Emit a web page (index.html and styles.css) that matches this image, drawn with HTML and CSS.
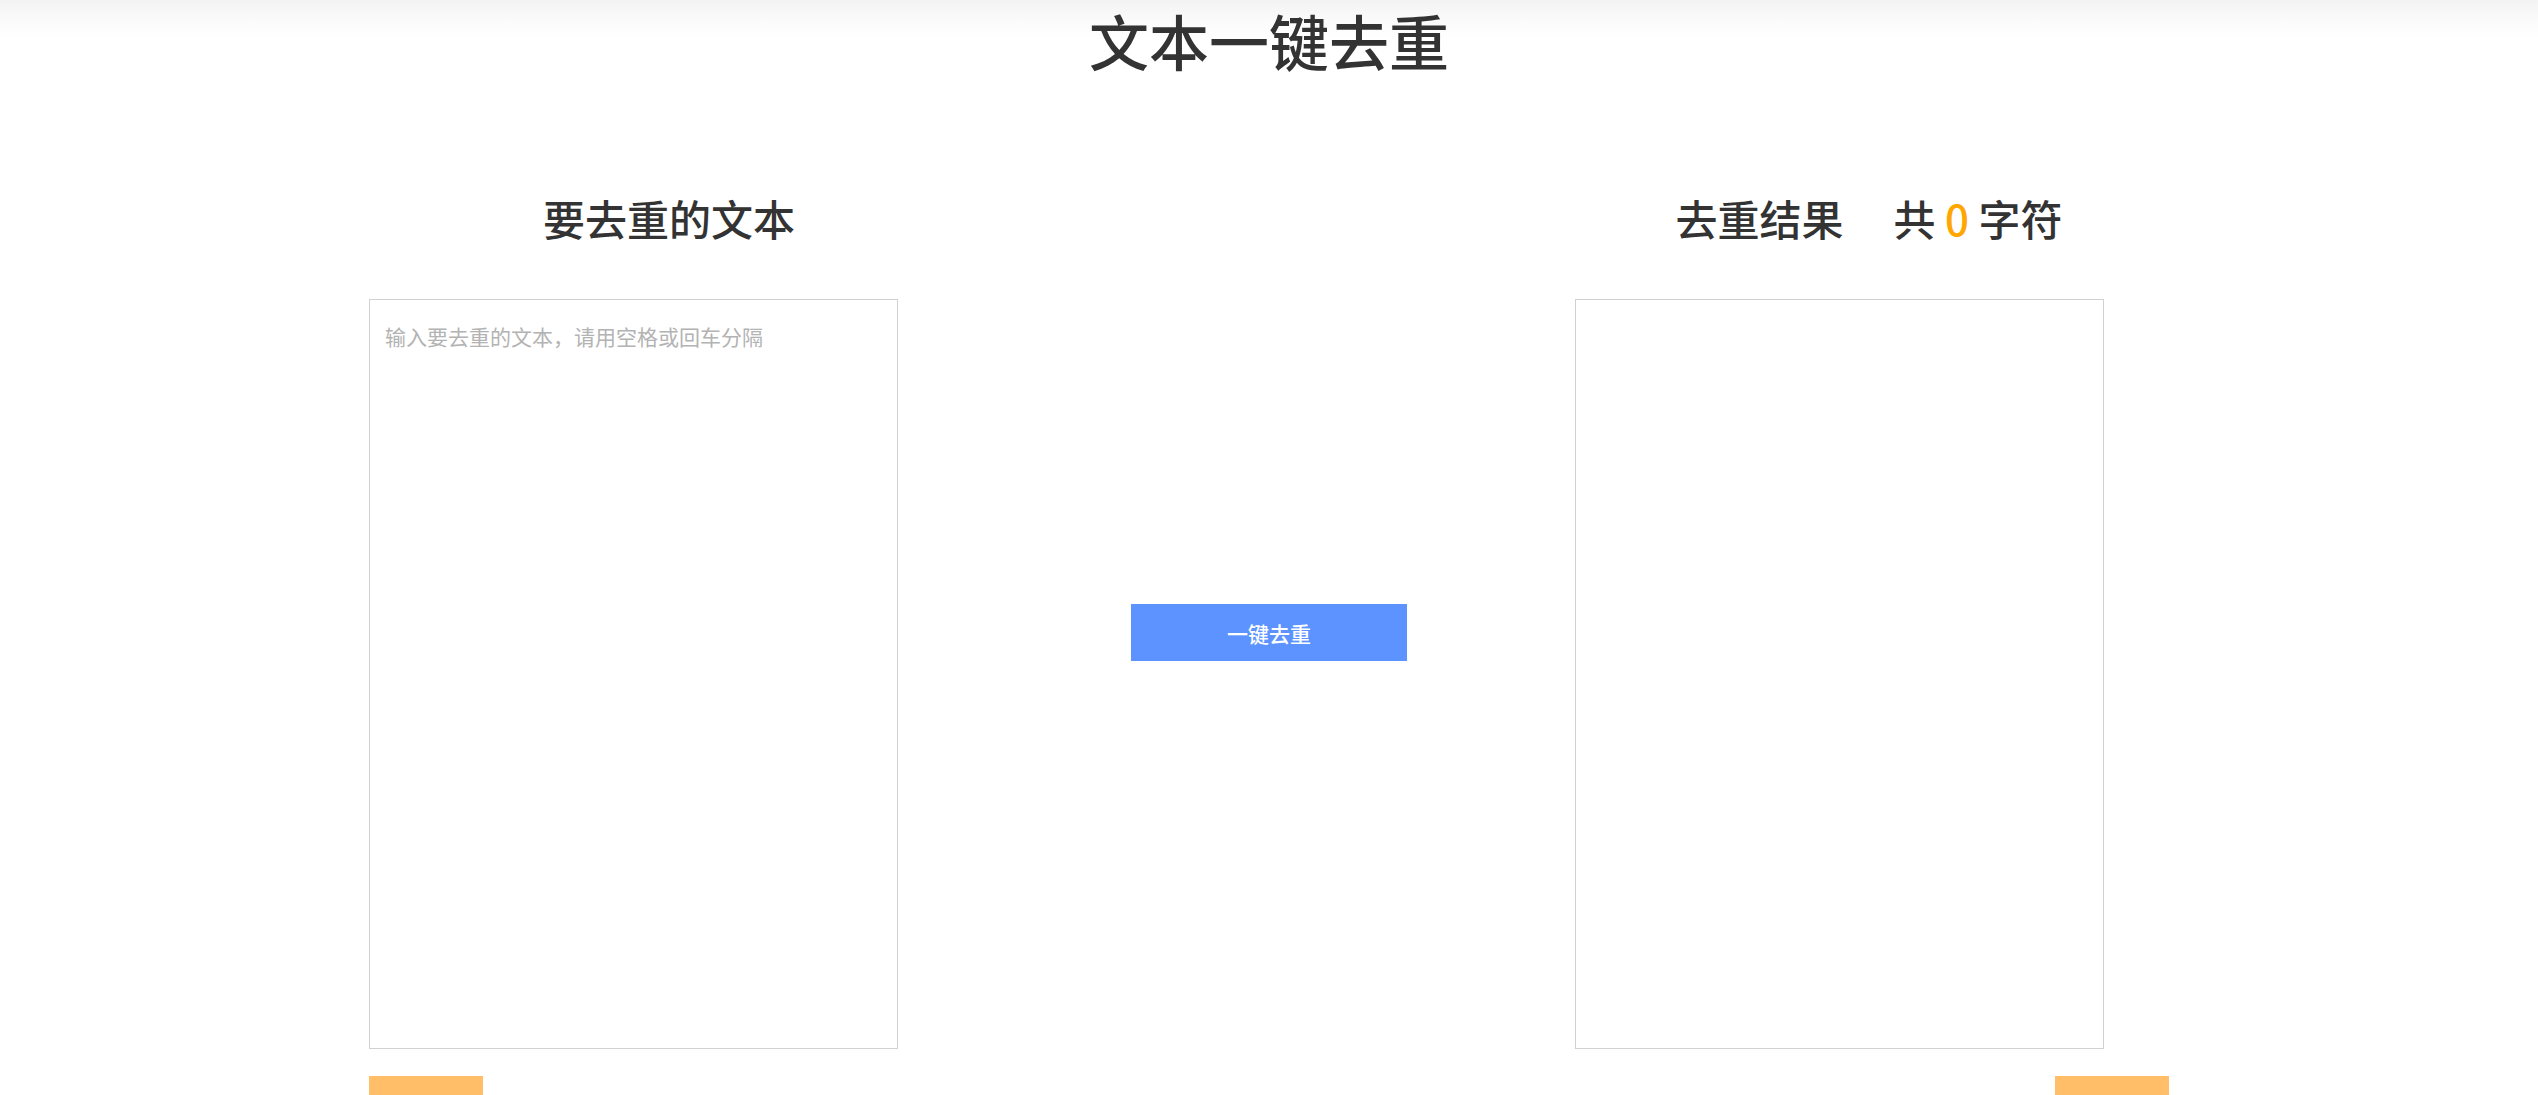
FILE: index.html
```html
<!DOCTYPE html>
<html lang="zh-CN">
<head>
<meta charset="utf-8">
<title>文本一键去重</title>
<link rel="stylesheet" href="styles.css">
</head>
<body>
<header class="top">
  <h1 class="title">文本一键去重</h1>
</header>
<main class="columns">
  <section class="col">
    <h2 class="heading">要去重的文本</h2>
    <textarea class="box" placeholder="输入要去重的文本，请用空格或回车分隔"></textarea>
  </section>
  <section class="col col-mid">
    <button class="btn" type="button">一键去重</button>
  </section>
  <section class="col">
    <h2 class="heading">去重结果<span class="count">共 <span class="num">0</span> 字符</span></h2>
    <textarea class="box box-right"></textarea>
  </section>
</main>
<footer class="bars">
  <span class="bar"></span>
  <span class="bar"></span>
</footer>
</body>
</html>
```
FILE: styles.css
```css
html, body {
  margin: 0;
  padding: 0;
  background: #fff;
}
body {
  font-family: "Noto Sans CJK SC", "Noto Sans", sans-serif;
  color: #333;
  overflow: hidden;
}
.top {
  background: linear-gradient(#f3f3f3 0, #fbfbfb 22px, #fff 40px);
}
.title {
  margin: 0;
  font-size: 60px;
  line-height: 80px;
  font-weight: 500;
  text-align: center;
  color: #333;
}
.columns {
  width: 1800px;
  margin: 108px auto 0;
  display: grid;
  grid-template-columns: repeat(3, 600px);
}
.heading {
  margin: 0;
  font-size: 42px;
  line-height: 60px;
  font-weight: 500;
  text-align: center;
  color: #333;
}
.count {
  margin-left: 50px;
}
.num {
  color: #ffa600;
}
.box {
  display: block;
  box-sizing: border-box;
  width: 529px;
  height: 750px;
  margin-top: 51px;
  padding: 21px 15px;
  border: 1px solid #d2d2d6;
  font-family: "Noto Sans CJK SC", sans-serif;
  font-size: 21px;
  color: #333;
  resize: none;
  outline: none;
}
.box::placeholder {
  color: #b3b3b3;
}
.box-right {
  margin-left: 6px;
}
.col-mid {
  padding-top: 416px;
  display: flex;
  justify-content: center;
  align-items: flex-start;
}
.btn {
  width: 276px;
  height: 57px;
  border: 0;
  background: #5c93ff;
  color: #fff;
  font-family: "Noto Sans CJK SC", sans-serif;
  font-size: 21px;
  font-weight: 500;
  padding: 0;
  cursor: pointer;
}
.bars {
  width: 1800px;
  margin: 27px auto 0;
  display: flex;
  justify-content: space-between;
}
.bar {
  display: block;
  width: 114px;
  height: 40px;
  background: #ffbe67;
}
```
